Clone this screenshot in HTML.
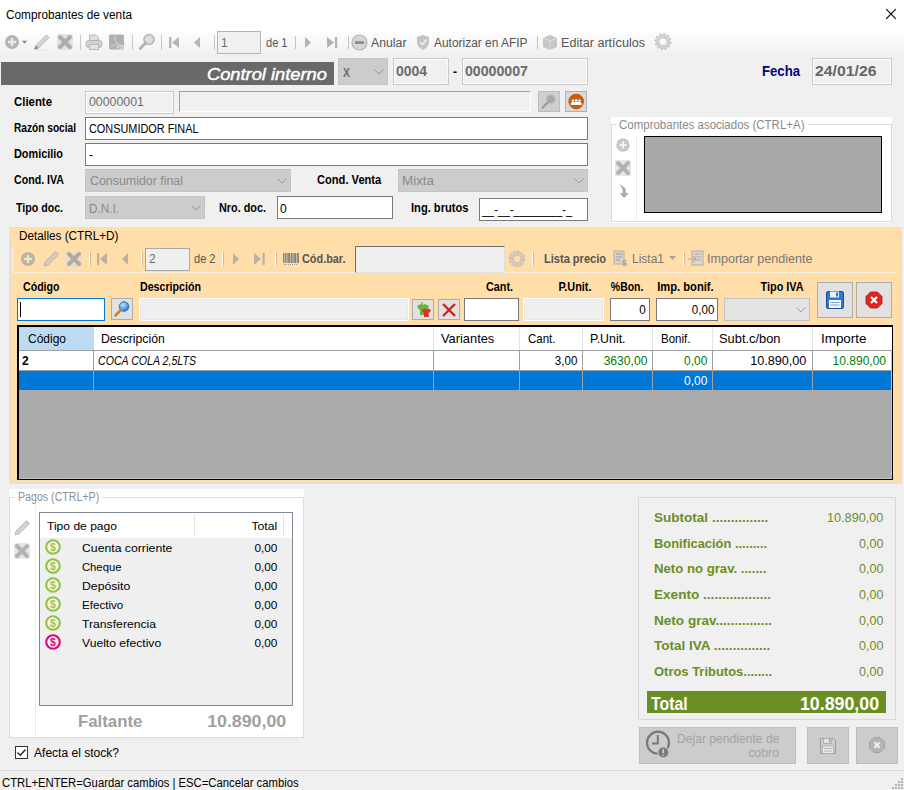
<!DOCTYPE html>
<html><head><meta charset="utf-8"><style>
html,body{margin:0;padding:0;}
body{width:904px;height:790px;position:relative;overflow:hidden;background:#f0f0f0;font-family:'Liberation Sans', sans-serif;}
</style></head><body>
<div style="position:absolute;left:0px;top:0px;width:904px;height:30px;box-sizing:border-box;z-index:1;background:#fff;"></div>
<svg style="position:absolute;left:885px;top:8px;z-index:3" width="12" height="12" viewBox="0 0 12 12"><path d="M1.2,1.2 L10.8,10.8 M10.8,1.2 L1.2,10.8" stroke="#000" stroke-width="1.1"/></svg>
<div style="position:absolute;left:0px;top:30px;width:904px;height:26px;box-sizing:border-box;z-index:1;background:linear-gradient(#fefefe,#f0f0f0);"></div>
<svg style="position:absolute;left:4px;top:34px;z-index:3" width="26" height="16" viewBox="0 0 26 16"><circle cx="8" cy="8" r="7" fill="#b5b5b5"/><path d="M8,4v8M4,8h8" stroke="#ececec" stroke-width="2.4"/><path d="M18,6.8h5.2l-2.6,3z" fill="#8a8a8a"/></svg>
<svg style="position:absolute;left:33px;top:33px;z-index:3" width="18" height="18" viewBox="0 0 18 18"><path d="M1.5,16.5 L2.8,12.5 L13.5,1.8 L16.2,4.5 L5.5,15.2 Z" fill="#d4d4d4" stroke="#b8b8b8" stroke-width="0.9"/><path d="M1.5,16.5 L2.8,12.5 L5.5,15.2Z" fill="#8c8c8c"/><path d="M3,17.2 H14" stroke="#e2e2e2" stroke-width="0.8"/></svg>
<svg style="position:absolute;left:56px;top:33px;z-index:3" width="18" height="18" viewBox="0 0 18 18"><rect x="1" y="1" width="16" height="16" rx="2" fill="#e2e2e2"/><path d="M4,4 L14,14 M14,4 L4,14" stroke="#adadad" stroke-width="4" stroke-linecap="round"/></svg>
<div style="position:absolute;left:80px;top:35px;width:1px;height:15px;box-sizing:border-box;z-index:3;background:#c8c8c8;"></div>
<svg style="position:absolute;left:85px;top:33px;z-index:3" width="18" height="18" viewBox="0 0 18 18"><path d="M4.5,8 V2 H11 L13.5,4.5 V8" fill="#dedede" stroke="#b8b8b8"/><rect x="1.2" y="7.5" width="15.6" height="7" rx="2.5" fill="#d2d2d2" stroke="#b3b3b3"/><rect x="4.5" y="11.5" width="9" height="5" fill="#e4e4e4" stroke="#b8b8b8"/></svg>
<svg style="position:absolute;left:108px;top:33px;z-index:3" width="18" height="18" viewBox="0 0 18 18"><rect x="1" y="1.5" width="15" height="15" rx="1.5" fill="#b0b0b0"/><path d="M6.5,2 Q7,8 9,10 Q11,12 14,12.5 M9,10 Q6,12 3,14" stroke="#dcdcdc" fill="none" stroke-width="0.8"/><text x="8.5" y="15.5" font-size="4.5" font-weight="bold" fill="#e0e0e0" font-family="Liberation Sans">PDF</text></svg>
<div style="position:absolute;left:132px;top:35px;width:1px;height:15px;box-sizing:border-box;z-index:3;background:#c8c8c8;"></div>
<svg style="position:absolute;left:138px;top:33px;z-index:3" width="18" height="18" viewBox="0 0 18 18"><circle cx="11" cy="6.5" r="5" fill="#dcdcdc" stroke="#b5b5b5" stroke-width="1.6"/><path d="M7.5,10 L2.2,15.5" stroke="#b0b0b0" stroke-width="2.6" stroke-linecap="round"/></svg>
<div style="position:absolute;left:161px;top:35px;width:1px;height:15px;box-sizing:border-box;z-index:3;background:#c8c8c8;"></div>
<svg style="position:absolute;left:168px;top:36px;z-index:3" width="14" height="13" viewBox="0 0 14 13"><rect x="1" y="1" width="2.4" height="11" fill="#b5b5b5"/><path d="M11,1 L4,6.5 L11,12Z" fill="#b5b5b5"/></svg>
<svg style="position:absolute;left:192px;top:36px;z-index:3" width="10" height="13" viewBox="0 0 10 13"><path d="M8,1 L2,6.5 L8,12Z" fill="#b5b5b5"/></svg>
<div style="position:absolute;left:214px;top:35px;width:1px;height:15px;box-sizing:border-box;z-index:3;background:#c8c8c8;"></div>
<div style="position:absolute;left:217px;top:31px;width:44px;height:23px;box-sizing:border-box;z-index:2;background:#f0f0f0;border:1px solid #b5b5b5;"></div>
<div style="position:absolute;left:295px;top:36px;width:1px;height:13px;box-sizing:border-box;z-index:3;background:#c4c4c4;"></div>
<svg style="position:absolute;left:303px;top:36px;z-index:3" width="10" height="13" viewBox="0 0 10 13"><path d="M2,1 L8,6.5 L2,12Z" fill="#b3b3b3"/></svg>
<svg style="position:absolute;left:326px;top:36px;z-index:3" width="13" height="13" viewBox="0 0 13 13"><path d="M1,1 L8,6.5 L1,12Z" fill="#b3b3b3"/><rect x="9" y="1" width="2.2" height="11" fill="#b3b3b3"/></svg>
<div style="position:absolute;left:348px;top:36px;width:1px;height:13px;box-sizing:border-box;z-index:3;background:#c4c4c4;"></div>
<svg style="position:absolute;left:351px;top:34px;z-index:3" width="18" height="17" viewBox="0 0 18 17"><circle cx="8.5" cy="8.5" r="7.5" fill="#d6d6d6" stroke="#b3b3b3" stroke-width="1.2"/><rect x="4" y="7.2" width="9" height="2.8" fill="#8e8e8e"/></svg>
<svg style="position:absolute;left:415px;top:34px;z-index:3" width="16" height="17" viewBox="0 0 16 17"><path d="M8,1 L14,3 L14,9 Q13,14 8,16 Q3,14 2,9 L2,3Z" fill="#c4c4c4"/><path d="M5,8 L7.5,10.5 L11.5,5.5" stroke="#efefef" stroke-width="1.6" fill="none"/></svg>
<div style="position:absolute;left:537px;top:36px;width:1px;height:13px;box-sizing:border-box;z-index:3;background:#c4c4c4;"></div>
<svg style="position:absolute;left:542px;top:34px;z-index:3" width="16" height="17" viewBox="0 0 16 17"><path d="M8,1 L15,4 L15,13 L8,16 L1,13 L1,4Z" fill="#c6c6c6"/><path d="M1,4 L8,7 L15,4 M8,7 V16" stroke="#dedede" fill="none"/></svg>
<svg style="position:absolute;left:653px;top:33px;z-index:3" width="19" height="18" viewBox="0 0 19 18"><path fill-rule="evenodd" d="M16.60,8.70 L18.17,9.34 L17.97,10.61 L16.28,10.74 L15.72,12.00 L16.76,13.34 L15.95,14.34 L14.42,13.60 L13.30,14.42 L13.53,16.10 L12.33,16.56 L11.37,15.16 L10.00,15.30 L9.36,16.87 L8.09,16.67 L7.96,14.98 L6.70,14.42 L5.36,15.46 L4.36,14.65 L5.10,13.12 L4.28,12.00 L2.60,12.23 L2.14,11.03 L3.54,10.07 L3.40,8.70 L1.83,8.06 L2.03,6.79 L3.72,6.66 L4.28,5.40 L3.24,4.06 L4.05,3.06 L5.58,3.80 L6.70,2.98 L6.47,1.30 L7.67,0.84 L8.63,2.24 L10.00,2.10 L10.64,0.53 L11.91,0.73 L12.04,2.42 L13.30,2.98 L14.64,1.94 L15.64,2.75 L14.90,4.28 L15.72,5.40 L17.40,5.17 L17.86,6.37 L16.46,7.33Z M14.00,8.70 A4.0,4.0 0 1,0 6.00,8.70 A4.0,4.0 0 1,0 14.00,8.70Z" fill="#d2d2d2" stroke="#bcbcbc" stroke-width="0.7"/></svg>
<div style="position:absolute;left:1px;top:62px;width:333px;height:23px;box-sizing:border-box;z-index:1;background:#696969;"></div>
<div style="position:absolute;left:338px;top:58px;width:50px;height:27px;box-sizing:border-box;z-index:2;background:#cccccc;border:1px solid #c4c4c4;"></div>
<svg style="position:absolute;left:373.5px;top:68.5px;z-index:3" width="10" height="6" viewBox="0 0 10 6"><polyline points="0.5,0.5 5,5 9.5,0.5" fill="none" stroke="#999" stroke-width="1"/></svg>
<div style="position:absolute;left:393px;top:58px;width:56px;height:27px;box-sizing:border-box;z-index:2;background:#f0f0f0;border:1px solid #c9c9c9;box-shadow:inset 0 0 0 1px #fbfbfb;"></div>
<div style="position:absolute;left:462px;top:58px;width:126px;height:27px;box-sizing:border-box;z-index:2;background:#f0f0f0;border:1px solid #c9c9c9;box-shadow:inset 0 0 0 1px #fbfbfb;"></div>
<div style="position:absolute;left:812px;top:58px;width:80px;height:27px;box-sizing:border-box;z-index:2;background:#f0f0f0;border:1px solid #c9c9c9;box-shadow:inset 0 0 0 1px #fbfbfb;"></div>
<div style="position:absolute;left:85px;top:91px;width:89px;height:23px;box-sizing:border-box;z-index:2;background:#f0f0f0;border:1px solid #c9c9c9;box-shadow:inset 0 0 0 1px #fbfbfb;"></div>
<div style="position:absolute;left:179px;top:91px;width:352px;height:21px;box-sizing:border-box;z-index:1;background:#f0f0f0;border-top:1px solid #a0a0a0;border-left:1px solid #a0a0a0;border-bottom:1px solid #fff;border-right:1px solid #fff;"></div>
<div style="position:absolute;left:538px;top:91px;width:22px;height:21px;box-sizing:border-box;z-index:1;background:#cfcfcf;border:1px solid #bdbdbd;"></div>
<svg style="position:absolute;left:540px;top:93px;z-index:3" width="18" height="17" viewBox="0 0 18 17"><circle cx="10.8" cy="6.2" r="4.6" fill="#a9a9a9" stroke="#c4c4c4" stroke-width="1.2"/><path d="M7.6,9.4 L2.8,14.6" stroke="#9a9a9a" stroke-width="2.2" stroke-linecap="round"/></svg>
<div style="position:absolute;left:565px;top:91px;width:22px;height:21px;box-sizing:border-box;z-index:1;background:#d9d9d9;border:1px solid #b0b0b0;"></div>
<svg style="position:absolute;left:567px;top:93px;z-index:3" width="18" height="17" viewBox="0 0 18 17"><circle cx="9.2" cy="8.6" r="7.8" fill="#c85c0c"/><path d="M3.8,12 h10.8 v-1.6 q-0.8,-1.6 -2.5,-1.6 h-5.8 q-1.7,0 -2.5,1.6z" fill="#fff"/><circle cx="5.8" cy="7.6" r="1.2" fill="#fff"/><circle cx="9.2" cy="7.2" r="1.3" fill="#fff"/><circle cx="12.6" cy="7.6" r="1.2" fill="#fff"/><path d="M5.8,9v2M9.2,8.8v2M12.6,9v2" stroke="#fff" stroke-width="1.6"/></svg>
<div style="position:absolute;left:85px;top:117px;width:503px;height:23px;box-sizing:border-box;z-index:2;background:#fff;border:1px solid #7a7a7a;"></div>
<div style="position:absolute;left:85px;top:143px;width:503px;height:23px;box-sizing:border-box;z-index:2;background:#fff;border:1px solid #7a7a7a;"></div>
<div style="position:absolute;left:85px;top:169px;width:206px;height:23px;box-sizing:border-box;z-index:2;background:#cccccc;border:1px solid #c4c4c4;"></div>
<svg style="position:absolute;left:276.5px;top:177.5px;z-index:3" width="10" height="6" viewBox="0 0 10 6"><polyline points="0.5,0.5 5,5 9.5,0.5" fill="none" stroke="#999" stroke-width="1"/></svg>
<div style="position:absolute;left:398px;top:169px;width:190px;height:23px;box-sizing:border-box;z-index:2;background:#cccccc;border:1px solid #c4c4c4;"></div>
<svg style="position:absolute;left:573.5px;top:177.5px;z-index:3" width="10" height="6" viewBox="0 0 10 6"><polyline points="0.5,0.5 5,5 9.5,0.5" fill="none" stroke="#999" stroke-width="1"/></svg>
<div style="position:absolute;left:85px;top:196px;width:120px;height:23px;box-sizing:border-box;z-index:2;background:#cccccc;border:1px solid #c4c4c4;"></div>
<svg style="position:absolute;left:190.5px;top:204.5px;z-index:3" width="10" height="6" viewBox="0 0 10 6"><polyline points="0.5,0.5 5,5 9.5,0.5" fill="none" stroke="#999" stroke-width="1"/></svg>
<div style="position:absolute;left:277px;top:196px;width:116px;height:23px;box-sizing:border-box;z-index:2;background:#fff;border:1px solid #7a7a7a;"></div>
<div style="position:absolute;left:479px;top:198px;width:109px;height:23px;box-sizing:border-box;z-index:2;background:#fff;border:1px solid #7a7a7a;"></div>
<div style="position:absolute;left:611px;top:117px;width:281px;height:106px;box-sizing:border-box;z-index:1;background:#fff;"></div>
<div style="position:absolute;left:611px;top:124px;width:281px;height:98px;box-sizing:border-box;z-index:2;border:1px solid #dcdcdc;"></div>
<div style="position:absolute;left:616px;top:119px;width:192px;height:12px;box-sizing:border-box;z-index:3;background:#fff;"></div>
<div style="position:absolute;left:636px;top:136px;width:1px;height:83px;box-sizing:border-box;z-index:3;background:#ececec;"></div>
<svg style="position:absolute;left:615px;top:137px;z-index:3" width="16" height="16" viewBox="0 0 16 16"><circle cx="8" cy="8" r="6.8" fill="#c8c8c8"/><path d="M8,4.5v7M4.5,8h7" stroke="#f4f4f4" stroke-width="2"/></svg>
<svg style="position:absolute;left:614px;top:159px;z-index:3" width="18" height="18" viewBox="0 0 18 18"><rect x="1" y="1" width="16" height="16" rx="2" fill="#e6e6e6"/><path d="M4,4 L14,14 M14,4 L4,14" stroke="#b3b3b3" stroke-width="4" stroke-linecap="round"/></svg>
<svg style="position:absolute;left:615px;top:183px;z-index:3" width="16" height="16" viewBox="0 0 16 16"><path d="M4,1 Q12,4 11,10 L14,10 L9,15 L4.5,10 L7.5,10 Q8,5 4,1Z" fill="#b0b0b0"/></svg>
<div style="position:absolute;left:644px;top:136px;width:238px;height:77px;box-sizing:border-box;z-index:2;background:#a9a9a9;border:1px solid #000;"></div>
<div style="position:absolute;left:9px;top:227px;width:893px;height:257px;box-sizing:border-box;z-index:0;background:#ffdeaa;"></div>
<div style="position:absolute;left:10px;top:235px;width:892px;height:248px;box-sizing:border-box;z-index:1;border:1px solid #e4dcd0;"></div>
<div style="position:absolute;left:15px;top:229px;width:106px;height:12px;box-sizing:border-box;z-index:1;background:#ffdeaa;"></div>
<div style="position:absolute;left:12px;top:246px;width:886px;height:27px;box-sizing:border-box;z-index:1;border-bottom:1px solid #fbf1e3;border-left:1px solid #fbf1e3;border-right:1px solid #f1e2cc;border-radius:3px;"></div>
<svg style="position:absolute;left:20px;top:251px;z-index:3" width="16" height="16" viewBox="0 0 16 16"><circle cx="8" cy="8" r="7" fill="#bfb3a4"/><path d="M8,4v8M4,8h8" stroke="#f2e6d6" stroke-width="2.2"/></svg>
<svg style="position:absolute;left:42px;top:250px;z-index:3" width="18" height="18" viewBox="0 0 18 18"><path d="M2,16 L3,12 L13.5,1.5 L16.5,4.5 L6,15 Z" fill="#d9cbb9" stroke="#bdb1a2" stroke-width="1"/></svg>
<svg style="position:absolute;left:65px;top:250px;z-index:3" width="18" height="18" viewBox="0 0 18 18"><rect x="1" y="1" width="16" height="16" rx="2" fill="#e9ddd0"/><path d="M4,4 L14,14 M14,4 L4,14" stroke="#b3aa9e" stroke-width="4" stroke-linecap="round"/></svg>
<div style="position:absolute;left:89px;top:252px;width:1px;height:14px;box-sizing:border-box;z-index:3;background:#fff;"></div>
<div style="position:absolute;left:90px;top:252px;width:1px;height:14px;box-sizing:border-box;z-index:3;background:#c9bba8;"></div>
<svg style="position:absolute;left:96px;top:252px;z-index:3" width="14" height="14" viewBox="0 0 14 14"><rect x="1" y="1" width="2.2" height="12" fill="#bdb1a2"/><path d="M11,1 L4,7 L11,13Z" fill="#bdb1a2"/></svg>
<svg style="position:absolute;left:120px;top:252px;z-index:3" width="10" height="14" viewBox="0 0 10 14"><path d="M8,1 L2,7 L8,13Z" fill="#bdb1a2"/></svg>
<div style="position:absolute;left:141px;top:252px;width:1px;height:14px;box-sizing:border-box;z-index:3;background:#fff;"></div>
<div style="position:absolute;left:142px;top:252px;width:1px;height:14px;box-sizing:border-box;z-index:3;background:#c9bba8;"></div>
<div style="position:absolute;left:145px;top:248px;width:45px;height:23px;box-sizing:border-box;z-index:2;background:#efefef;border:1px solid #a8a8a8;"></div>
<div style="position:absolute;left:222px;top:252px;width:1px;height:14px;box-sizing:border-box;z-index:3;background:#fff;"></div>
<div style="position:absolute;left:223px;top:252px;width:1px;height:14px;box-sizing:border-box;z-index:3;background:#c9bba8;"></div>
<svg style="position:absolute;left:231px;top:252px;z-index:3" width="10" height="14" viewBox="0 0 10 14"><path d="M2,1 L8,7 L2,13Z" fill="#bdb1a2"/></svg>
<svg style="position:absolute;left:253px;top:252px;z-index:3" width="13" height="14" viewBox="0 0 13 14"><path d="M1,1 L8,7 L1,13Z" fill="#bdb1a2"/><rect x="9.5" y="1" width="2.2" height="12" fill="#bdb1a2"/></svg>
<div style="position:absolute;left:275px;top:252px;width:1px;height:14px;box-sizing:border-box;z-index:3;background:#fff;"></div>
<div style="position:absolute;left:276px;top:252px;width:1px;height:14px;box-sizing:border-box;z-index:3;background:#c9bba8;"></div>
<svg style="position:absolute;left:283px;top:251px;z-index:3" width="16" height="16" viewBox="0 0 16 16"><rect x="0" y="2" width="16" height="10" fill="#d8ccb8"/><rect x="0" y="2" width="1.2" height="10" fill="#8a8279"/><rect x="2" y="2" width="1" height="10" fill="#8a8279"/><rect x="3.6" y="2" width="1" height="10" fill="#8a8279"/><rect x="5.2" y="2" width="2" height="10" fill="#8a8279"/><rect x="8" y="2" width="1" height="10" fill="#8a8279"/><rect x="9.6" y="2" width="1" height="10" fill="#8a8279"/><rect x="11.2" y="2" width="1.8" height="10" fill="#8a8279"/><rect x="13.8" y="2" width="1" height="10" fill="#8a8279"/><rect x="15" y="2" width="1" height="10" fill="#8a8279"/><path d="M1,13.5h14" stroke="#9d958a" stroke-dasharray="1 1"/></svg>
<div style="position:absolute;left:355px;top:246px;width:150px;height:27px;box-sizing:border-box;z-index:2;background:#efefef;border:1px solid #6d6d6d;border-right-color:#e0e0e0;border-bottom-color:#e0e0e0;"></div>
<svg style="position:absolute;left:508px;top:250px;z-index:3" width="18" height="18" viewBox="0 0 18 18"><path fill-rule="evenodd" d="M15.60,9.00 L17.17,9.64 L16.97,10.91 L15.28,11.04 L14.72,12.30 L15.76,13.64 L14.95,14.64 L13.42,13.90 L12.30,14.72 L12.53,16.40 L11.33,16.86 L10.37,15.46 L9.00,15.60 L8.36,17.17 L7.09,16.97 L6.96,15.28 L5.70,14.72 L4.36,15.76 L3.36,14.95 L4.10,13.42 L3.28,12.30 L1.60,12.53 L1.14,11.33 L2.54,10.37 L2.40,9.00 L0.83,8.36 L1.03,7.09 L2.72,6.96 L3.28,5.70 L2.24,4.36 L3.05,3.36 L4.58,4.10 L5.70,3.28 L5.47,1.60 L6.67,1.14 L7.63,2.54 L9.00,2.40 L9.64,0.83 L10.91,1.03 L11.04,2.72 L12.30,3.28 L13.64,2.24 L14.64,3.05 L13.90,4.58 L14.72,5.70 L16.40,5.47 L16.86,6.67 L15.46,7.63Z M13.00,9.00 A4.0,4.0 0 1,0 5.00,9.00 A4.0,4.0 0 1,0 13.00,9.00Z" fill="#d6cbbd" stroke="#bfb5a8" stroke-width="0.7"/></svg>
<div style="position:absolute;left:532px;top:252px;width:1px;height:14px;box-sizing:border-box;z-index:3;background:#fff;"></div>
<div style="position:absolute;left:533px;top:252px;width:1px;height:14px;box-sizing:border-box;z-index:3;background:#c9bba8;"></div>
<svg style="position:absolute;left:613px;top:250px;z-index:3" width="17" height="18" viewBox="0 0 17 18"><rect x="1" y="1" width="10" height="13" fill="#d9d2c8" stroke="#b3aca3"/><path d="M3,4h6M3,7h6M3,10h4" stroke="#a19a91"/><text x="9" y="16" font-size="9" font-weight="bold" fill="#a8a29a" font-family="Liberation Sans">$</text></svg>
<svg style="position:absolute;left:669px;top:256px;z-index:3" width="8" height="5" viewBox="0 0 8 5"><path d="M0,0h7l-3.5,4z" fill="#a8a29a"/></svg>
<div style="position:absolute;left:683px;top:252px;width:1px;height:14px;box-sizing:border-box;z-index:3;background:#fff;"></div>
<div style="position:absolute;left:684px;top:252px;width:1px;height:14px;box-sizing:border-box;z-index:3;background:#c9bba8;"></div>
<svg style="position:absolute;left:688px;top:250px;z-index:3" width="16" height="17" viewBox="0 0 16 17"><rect x="4" y="1" width="11" height="14" fill="#ddd6cc" stroke="#b3aca3"/><path d="M6,4h7M6,7h7M6,10h7" stroke="#b0a9a0"/><path d="M0,9h7M5,6l3,3l-3,3" stroke="#b3aca3" fill="none"/></svg>
<div style="position:absolute;left:17px;top:298px;width:88px;height:23px;box-sizing:border-box;z-index:2;background:#fff;border:1px solid #0078d7;"></div>
<div style="position:absolute;left:20px;top:302px;width:1px;height:15px;box-sizing:border-box;z-index:3;background:#000;"></div>
<div style="position:absolute;left:111px;top:298px;width:22px;height:22px;box-sizing:border-box;z-index:2;background:#e1e1e1;border:1px solid #adadad;"></div>
<svg style="position:absolute;left:113px;top:300px;z-index:3" width="18" height="18" viewBox="0 0 18 18"><defs><radialGradient id="mg" cx="0.4" cy="0.35" r="0.7"><stop offset="0" stop-color="#bfe3ff"/><stop offset="1" stop-color="#1d6fd6"/></radialGradient></defs><circle cx="11" cy="6.5" r="4.8" fill="url(#mg)" stroke="#2c5c9a" stroke-width="0.8"/><path d="M7.8,10 L2.5,15.5" stroke="#c48b2a" stroke-width="2.6" stroke-linecap="round"/></svg>
<div style="position:absolute;left:139px;top:298px;width:270px;height:23px;box-sizing:border-box;z-index:2;background:#efefef;border:1px solid #fff;box-shadow:inset 0 0 0 1px #e8e8e8;"></div>
<div style="position:absolute;left:412px;top:299px;width:22px;height:21px;box-sizing:border-box;z-index:2;background:#e1e1e1;border:1px solid #adadad;"></div>
<svg style="position:absolute;left:414px;top:301px;z-index:3" width="18" height="18" viewBox="0 0 18 18"><path d="M3,5 L7,3 Q9,5 11,3 L15,5 L13,9 L12,8 L12,14 L6,14 L6,8 L5,9Z" fill="#6cb33e"/><path d="M8,9 L11,7.5 Q12.5,9 14,7.5 L17,9 L15.5,12 L14.7,11.3 L14.7,16 L10,16 L10,11.3 L9.3,12Z" fill="#d9342b"/><path d="M8,1v3" stroke="#6cb33e" stroke-width="1.2"/></svg>
<div style="position:absolute;left:438px;top:299px;width:22px;height:21px;box-sizing:border-box;z-index:2;background:#e1e1e1;border:1px solid #adadad;"></div>
<svg style="position:absolute;left:441px;top:302px;z-index:3" width="16" height="16" viewBox="0 0 16 16"><path d="M2,2 L14,14 M14,2 L2,14" stroke="#d32020" stroke-width="2.4"/></svg>
<div style="position:absolute;left:464px;top:298px;width:55px;height:23px;box-sizing:border-box;z-index:2;background:#fff;border:1px solid #7a7a7a;"></div>
<div style="position:absolute;left:523px;top:298px;width:81px;height:23px;box-sizing:border-box;z-index:2;background:#efefef;border:1px solid #fff;box-shadow:inset 0 0 0 1px #e8e8e8;"></div>
<div style="position:absolute;left:610px;top:298px;width:40px;height:23px;box-sizing:border-box;z-index:2;background:#fff;border:1px solid #7a7a7a;"></div>
<div style="position:absolute;left:656px;top:298px;width:62px;height:23px;box-sizing:border-box;z-index:2;background:#fff;border:1px solid #7a7a7a;"></div>
<div style="position:absolute;left:724px;top:298px;width:86px;height:23px;box-sizing:border-box;z-index:2;background:#e3e3e3;border:1px solid #c2c2c2;"></div>
<svg style="position:absolute;left:795.5px;top:306.5px;z-index:3" width="10" height="6" viewBox="0 0 10 6"><polyline points="0.5,0.5 5,5 9.5,0.5" fill="none" stroke="#999" stroke-width="1"/></svg>
<div style="position:absolute;left:817px;top:282px;width:36px;height:36px;box-sizing:border-box;z-index:2;background:#e1e1e1;border:1px solid #adadad;"></div>
<svg style="position:absolute;left:825px;top:290px;z-index:3" width="20" height="20" viewBox="0 0 20 20"><rect x="1.5" y="1.5" width="17" height="17" rx="1.5" fill="#2f79d3" stroke="#1c4f99"/><rect x="5" y="1.5" width="9" height="6" fill="#e8f1fb"/><rect x="11" y="2.5" width="2" height="4" fill="#2f79d3"/><rect x="4" y="10" width="12" height="8" fill="#f4f7fb"/><path d="M5.5,12.5h9M5.5,15h9" stroke="#7da4d6"/></svg>
<div style="position:absolute;left:856px;top:282px;width:36px;height:36px;box-sizing:border-box;z-index:2;background:#e1e1e1;border:1px solid #adadad;"></div>
<svg style="position:absolute;left:865px;top:291px;z-index:3" width="18" height="18" viewBox="0 0 18 18"><path d="M5.5,1 h7 l4.5,4.5 v7 l-4.5,4.5 h-7 l-4.5,-4.5 v-7z" fill="#e0261c" stroke="#b31b14" stroke-width="0.8"/><path d="M6,6 L12,12 M12,6 L6,12" stroke="#fff" stroke-width="2.2"/></svg>
<div style="position:absolute;left:17px;top:325px;width:876px;height:155px;box-sizing:border-box;z-index:2;background:#ababab;border:1px solid #000;border-left-width:2px;border-top-width:2px;box-shadow:inset -1px -1px 0 #c4c4c4;"></div>
<div style="position:absolute;left:19px;top:327px;width:873px;height:23px;box-sizing:border-box;z-index:3;background:#fff;"></div>
<div style="position:absolute;left:19px;top:327px;width:75px;height:23px;box-sizing:border-box;z-index:5;background:#bcdcf4;"></div>
<div style="position:absolute;left:19px;top:350px;width:873px;height:1px;box-sizing:border-box;z-index:4;background:#a0a0a0;"></div>
<div style="position:absolute;left:19px;top:351px;width:872px;height:19px;box-sizing:border-box;z-index:3;background:#fff;"></div>
<div style="position:absolute;left:19px;top:370px;width:872px;height:1px;box-sizing:border-box;z-index:4;background:#a0a0a0;"></div>
<div style="position:absolute;left:19px;top:371px;width:872px;height:19px;box-sizing:border-box;z-index:3;background:#0078d7;"></div>
<div style="position:absolute;left:93px;top:327px;width:1px;height:23px;box-sizing:border-box;z-index:4;background:#e5e5e5;"></div>
<div style="position:absolute;left:93px;top:351px;width:1px;height:39px;box-sizing:border-box;z-index:4;background:#a0a0a0;"></div>
<div style="position:absolute;left:433px;top:327px;width:1px;height:23px;box-sizing:border-box;z-index:4;background:#e5e5e5;"></div>
<div style="position:absolute;left:433px;top:351px;width:1px;height:39px;box-sizing:border-box;z-index:4;background:#a0a0a0;"></div>
<div style="position:absolute;left:519px;top:327px;width:1px;height:23px;box-sizing:border-box;z-index:4;background:#e5e5e5;"></div>
<div style="position:absolute;left:519px;top:351px;width:1px;height:39px;box-sizing:border-box;z-index:4;background:#a0a0a0;"></div>
<div style="position:absolute;left:582px;top:327px;width:1px;height:23px;box-sizing:border-box;z-index:4;background:#e5e5e5;"></div>
<div style="position:absolute;left:582px;top:351px;width:1px;height:39px;box-sizing:border-box;z-index:4;background:#a0a0a0;"></div>
<div style="position:absolute;left:652px;top:327px;width:1px;height:23px;box-sizing:border-box;z-index:4;background:#e5e5e5;"></div>
<div style="position:absolute;left:652px;top:351px;width:1px;height:39px;box-sizing:border-box;z-index:4;background:#a0a0a0;"></div>
<div style="position:absolute;left:712px;top:327px;width:1px;height:23px;box-sizing:border-box;z-index:4;background:#e5e5e5;"></div>
<div style="position:absolute;left:712px;top:351px;width:1px;height:39px;box-sizing:border-box;z-index:4;background:#a0a0a0;"></div>
<div style="position:absolute;left:812px;top:327px;width:1px;height:23px;box-sizing:border-box;z-index:4;background:#e5e5e5;"></div>
<div style="position:absolute;left:812px;top:351px;width:1px;height:39px;box-sizing:border-box;z-index:4;background:#a0a0a0;"></div>
<div style="position:absolute;left:9px;top:489px;width:295px;height:249px;box-sizing:border-box;z-index:0;background:#fff;"></div>
<div style="position:absolute;left:9px;top:497px;width:295px;height:241px;box-sizing:border-box;z-index:1;border:1px solid #dddddd;"></div>
<div style="position:absolute;left:15px;top:490px;width:87px;height:13px;box-sizing:border-box;z-index:1;background:#fff;"></div>
<div style="position:absolute;left:35px;top:505px;width:1px;height:231px;box-sizing:border-box;z-index:3;background:#ececec;"></div>
<svg style="position:absolute;left:13px;top:519px;z-index:3" width="18" height="18" viewBox="0 0 18 18"><path d="M2,16 L3,12 L13.5,1.5 L16.5,4.5 L6,15 Z" fill="#d2d2d2" stroke="#bdbdbd" stroke-width="1"/></svg>
<svg style="position:absolute;left:13px;top:542px;z-index:3" width="18" height="18" viewBox="0 0 18 18"><rect x="1" y="1" width="16" height="16" rx="2" fill="#e6e6e6"/><path d="M4,4 L14,14 M14,4 L4,14" stroke="#b3b3b3" stroke-width="4" stroke-linecap="round"/></svg>
<div style="position:absolute;left:39px;top:512px;width:254px;height:194px;box-sizing:border-box;z-index:2;background:#efefef;border:1px solid #7e8793;"></div>
<div style="position:absolute;left:40px;top:513px;width:252px;height:25px;box-sizing:border-box;z-index:3;background:#fff;"></div>
<div style="position:absolute;left:194px;top:514px;width:1px;height:23px;box-sizing:border-box;z-index:4;background:#e5e5e5;"></div>
<div style="position:absolute;left:283px;top:514px;width:1px;height:23px;box-sizing:border-box;z-index:4;background:#e5e5e5;"></div>
<svg style="position:absolute;left:45px;top:539px;z-index:3" width="16" height="16" viewBox="0 0 16 16"><circle cx="8" cy="8" r="6.8" fill="#f4f4f4" stroke="#8cc63f" stroke-width="2.1"/><text x="8" y="11.7" text-anchor="middle" font-size="10.5" font-weight="bold" fill="#a3c24a" font-family="Liberation Sans">$</text></svg>
<svg style="position:absolute;left:45px;top:558px;z-index:3" width="16" height="16" viewBox="0 0 16 16"><circle cx="8" cy="8" r="6.8" fill="#f4f4f4" stroke="#8cc63f" stroke-width="2.1"/><text x="8" y="11.7" text-anchor="middle" font-size="10.5" font-weight="bold" fill="#a3c24a" font-family="Liberation Sans">$</text></svg>
<svg style="position:absolute;left:45px;top:577px;z-index:3" width="16" height="16" viewBox="0 0 16 16"><circle cx="8" cy="8" r="6.8" fill="#f4f4f4" stroke="#8cc63f" stroke-width="2.1"/><text x="8" y="11.7" text-anchor="middle" font-size="10.5" font-weight="bold" fill="#a3c24a" font-family="Liberation Sans">$</text></svg>
<svg style="position:absolute;left:45px;top:596px;z-index:3" width="16" height="16" viewBox="0 0 16 16"><circle cx="8" cy="8" r="6.8" fill="#f4f4f4" stroke="#8cc63f" stroke-width="2.1"/><text x="8" y="11.7" text-anchor="middle" font-size="10.5" font-weight="bold" fill="#a3c24a" font-family="Liberation Sans">$</text></svg>
<svg style="position:absolute;left:45px;top:615px;z-index:3" width="16" height="16" viewBox="0 0 16 16"><circle cx="8" cy="8" r="6.8" fill="#f4f4f4" stroke="#8cc63f" stroke-width="2.1"/><text x="8" y="11.7" text-anchor="middle" font-size="10.5" font-weight="bold" fill="#a3c24a" font-family="Liberation Sans">$</text></svg>
<svg style="position:absolute;left:45px;top:634px;z-index:3" width="16" height="16" viewBox="0 0 16 16"><circle cx="8" cy="8" r="6.8" fill="#f4f4f4" stroke="#e5007d" stroke-width="2.1"/><text x="8" y="11.7" text-anchor="middle" font-size="10.5" font-weight="bold" fill="#e5007d" font-family="Liberation Sans">$</text></svg>
<div style="position:absolute;left:15px;top:746px;width:13px;height:13px;box-sizing:border-box;z-index:2;background:#fff;border:1px solid #333;"></div>
<svg style="position:absolute;left:15px;top:746px;z-index:3" width="13" height="13" viewBox="0 0 13 13"><path d="M2.5,6.5 L5.3,9.3 L10.5,3.5" stroke="#222" stroke-width="1.3" fill="none"/></svg>
<div style="position:absolute;left:638px;top:497px;width:258px;height:223px;box-sizing:border-box;z-index:1;background:#f0f0f0;border:1px solid #d9d9d9;"></div>
<div style="position:absolute;left:647px;top:691px;width:239px;height:22px;box-sizing:border-box;z-index:2;background:#6b8e23;"></div>
<div style="position:absolute;left:639px;top:727px;width:157px;height:37px;box-sizing:border-box;z-index:2;background:#cccccc;border:1px solid #bfbfbf;"></div>
<svg style="position:absolute;left:644px;top:730px;z-index:3" width="32" height="32" viewBox="0 0 32 32"><circle cx="14" cy="12.7" r="11" fill="none" stroke="#777" stroke-width="2.2"/><path d="M13.8,5 V13.5 H8" stroke="#777" stroke-width="2" fill="none"/><circle cx="19.3" cy="22.4" r="5.6" fill="#7a7a7a" stroke="#cccccc" stroke-width="1.2"/><path d="M19.3,19.2v3.8M19.3,24.4v1.4" stroke="#d6d6d6" stroke-width="1.6"/></svg>
<div style="position:absolute;left:807px;top:727px;width:42px;height:37px;box-sizing:border-box;z-index:2;background:#cccccc;border:1px solid #bfbfbf;"></div>
<svg style="position:absolute;left:818px;top:736px;z-index:3" width="20" height="20" viewBox="0 0 20 20"><path d="M2.5,2.5 H15 L17.5,5 V17.5 H2.5Z" fill="#d0d0d0" stroke="#9a9a9a"/><rect x="5.5" y="2.5" width="8" height="5" fill="#e4e4e4" stroke="#a5a5a5" stroke-width="0.8"/><rect x="11" y="3.3" width="1.5" height="3" fill="#9a9a9a"/><rect x="4.5" y="10" width="11" height="7.5" fill="#ececec" stroke="#a5a5a5" stroke-width="0.8"/><path d="M6,12.5h8M6,15h8" stroke="#a5a5a5" stroke-width="0.8"/></svg>
<div style="position:absolute;left:856px;top:727px;width:42px;height:37px;box-sizing:border-box;z-index:2;background:#cccccc;border:1px solid #bfbfbf;"></div>
<svg style="position:absolute;left:868px;top:736px;z-index:3" width="18" height="18" viewBox="0 0 18 18"><path d="M6,1.5 h6 l4.5,4.5 v6 l-4.5,4.5 h-6 l-4.5,-4.5 v-6z" fill="#b4b4b4" stroke="#9a9a9a" stroke-width="0.8"/><path d="M6.3,6.3 L11.7,11.7 M11.7,6.3 L6.3,11.7" stroke="#ededed" stroke-width="2.2"/></svg>
<div style="position:absolute;left:0px;top:770px;width:904px;height:1px;box-sizing:border-box;z-index:2;background:#dadada;"></div>
<svg style="position:absolute;left:892px;top:777px;z-index:3" width="13" height="13" viewBox="0 0 13 13"><rect x="9" y="1" width="2" height="2" fill="#b0b0b0"/><rect x="6" y="4" width="2" height="2" fill="#b0b0b0"/><rect x="9" y="4" width="2" height="2" fill="#b0b0b0"/><rect x="3" y="7" width="2" height="2" fill="#b0b0b0"/><rect x="6" y="7" width="2" height="2" fill="#b0b0b0"/><rect x="9" y="7" width="2" height="2" fill="#b0b0b0"/><rect x="0" y="10" width="2" height="2" fill="#b0b0b0"/><rect x="3" y="10" width="2" height="2" fill="#b0b0b0"/><rect x="6" y="10" width="2" height="2" fill="#b0b0b0"/><rect x="9" y="10" width="2" height="2" fill="#b0b0b0"/></svg>
<div style="position:absolute;left:5.50px;top:8.94px;line-height:12px;font-family:'Liberation Sans', sans-serif;font-size:12px;font-weight:normal;font-style:normal;white-space:pre;color:#000;transform:scaleX(0.9837);transform-origin:left 50%;z-index:5">Comprobantes de venta</div>
<div style="position:absolute;left:221.00px;top:36.64px;line-height:12px;font-family:'Liberation Sans', sans-serif;font-size:12px;font-weight:normal;font-style:normal;white-space:pre;color:#6d6d6d;z-index:5">1</div>
<div style="position:absolute;left:265.50px;top:36.64px;line-height:12px;font-family:'Liberation Sans', sans-serif;font-size:12px;font-weight:normal;font-style:normal;white-space:pre;color:#555;transform:scaleX(0.9204);transform-origin:left 50%;z-index:5">de 1</div>
<div style="position:absolute;left:371.00px;top:36.64px;line-height:12px;font-family:'Liberation Sans', sans-serif;font-size:12px;font-weight:normal;font-style:normal;white-space:pre;color:#555;transform:scaleX(1.0234);transform-origin:left 50%;z-index:5">Anular</div>
<div style="position:absolute;left:433.50px;top:36.64px;line-height:12px;font-family:'Liberation Sans', sans-serif;font-size:12px;font-weight:normal;font-style:normal;white-space:pre;color:#555;transform:scaleX(0.9942);transform-origin:left 50%;z-index:5">Autorizar en AFIP</div>
<div style="position:absolute;left:561.00px;top:36.64px;line-height:12px;font-family:'Liberation Sans', sans-serif;font-size:12px;font-weight:normal;font-style:normal;white-space:pre;color:#555;transform:scaleX(1.0494);transform-origin:left 50%;z-index:5">Editar artículos</div>
<div style="position:absolute;right:576.60px;top:66.86px;line-height:16px;font-family:'Liberation Sans', sans-serif;font-size:16px;font-weight:normal;font-style:italic;white-space:pre;color:#fff;transform:scaleX(1.1434);transform-origin:right 50%;-webkit-text-stroke:0.45px #fff;z-index:5">Control interno</div>
<div style="position:absolute;left:343.20px;top:65.90px;line-height:13px;font-family:'Liberation Sans', sans-serif;font-size:13px;font-weight:bold;font-style:normal;white-space:pre;color:#6b6b6b;transform:scaleX(0.8072);transform-origin:left 50%;z-index:5">X</div>
<div style="position:absolute;left:395.80px;top:64.25px;line-height:14px;font-family:'Liberation Sans', sans-serif;font-size:14px;font-weight:bold;font-style:normal;white-space:pre;color:#6b6b6b;transform:scaleX(0.9950);transform-origin:left 50%;z-index:5">0004</div>
<div style="position:absolute;left:453.00px;top:66.34px;line-height:12px;font-family:'Liberation Sans', sans-serif;font-size:12px;font-weight:bold;font-style:normal;white-space:pre;color:#000;z-index:5">-</div>
<div style="position:absolute;left:464.50px;top:64.25px;line-height:14px;font-family:'Liberation Sans', sans-serif;font-size:14px;font-weight:bold;font-style:normal;white-space:pre;color:#6b6b6b;transform:scaleX(1.0113);transform-origin:left 50%;z-index:5">00000007</div>
<div style="position:absolute;left:762.40px;top:64.05px;line-height:14px;font-family:'Liberation Sans', sans-serif;font-size:14px;font-weight:bold;font-style:normal;white-space:pre;color:#000080;transform:scaleX(0.9390);transform-origin:left 50%;z-index:5">Fecha</div>
<div style="position:absolute;left:814.60px;top:64.05px;line-height:14px;font-family:'Liberation Sans', sans-serif;font-size:14px;font-weight:bold;font-style:normal;white-space:pre;color:#666;transform:scaleX(1.1284);transform-origin:left 50%;z-index:5">24/01/26</div>
<div style="position:absolute;left:14.00px;top:96.34px;line-height:12px;font-family:'Liberation Sans', sans-serif;font-size:12px;font-weight:bold;font-style:normal;white-space:pre;color:#000;transform:scaleX(0.9496);transform-origin:left 50%;z-index:5">Cliente</div>
<div style="position:absolute;left:88.50px;top:96.34px;line-height:12px;font-family:'Liberation Sans', sans-serif;font-size:12px;font-weight:normal;font-style:normal;white-space:pre;color:#6d6d6d;transform:scaleX(1.0301);transform-origin:left 50%;z-index:5">00000001</div>
<div style="position:absolute;left:14.00px;top:122.34px;line-height:12px;font-family:'Liberation Sans', sans-serif;font-size:12px;font-weight:bold;font-style:normal;white-space:pre;color:#000;transform:scaleX(0.8452);transform-origin:left 50%;z-index:5">Razón social</div>
<div style="position:absolute;left:88.75px;top:122.84px;line-height:12px;font-family:'Liberation Sans', sans-serif;font-size:12px;font-weight:normal;font-style:normal;white-space:pre;color:#000;transform:scaleX(0.9073);transform-origin:left 50%;z-index:5">CONSUMIDOR FINAL</div>
<div style="position:absolute;left:13.50px;top:148.34px;line-height:12px;font-family:'Liberation Sans', sans-serif;font-size:12px;font-weight:bold;font-style:normal;white-space:pre;color:#000;transform:scaleX(0.9071);transform-origin:left 50%;z-index:5">Domicilio</div>
<div style="position:absolute;left:89.00px;top:148.84px;line-height:12px;font-family:'Liberation Sans', sans-serif;font-size:12px;font-weight:normal;font-style:normal;white-space:pre;color:#000;z-index:5">-</div>
<div style="position:absolute;left:14.00px;top:174.34px;line-height:12px;font-family:'Liberation Sans', sans-serif;font-size:12px;font-weight:bold;font-style:normal;white-space:pre;color:#000;transform:scaleX(0.8859);transform-origin:left 50%;z-index:5">Cond. IVA</div>
<div style="position:absolute;left:89.50px;top:175.34px;line-height:12px;font-family:'Liberation Sans', sans-serif;font-size:12px;font-weight:normal;font-style:normal;white-space:pre;color:#8a8a8a;transform:scaleX(1.0328);transform-origin:left 50%;z-index:5">Consumidor final</div>
<div style="position:absolute;left:316.75px;top:174.34px;line-height:12px;font-family:'Liberation Sans', sans-serif;font-size:12px;font-weight:bold;font-style:normal;white-space:pre;color:#000;transform:scaleX(0.9265);transform-origin:left 50%;z-index:5">Cond. Venta</div>
<div style="position:absolute;left:402.00px;top:175.34px;line-height:12px;font-family:'Liberation Sans', sans-serif;font-size:12px;font-weight:normal;font-style:normal;white-space:pre;color:#8a8a8a;transform:scaleX(1.1161);transform-origin:left 50%;z-index:5">Mixta</div>
<div style="position:absolute;left:15.50px;top:202.34px;line-height:12px;font-family:'Liberation Sans', sans-serif;font-size:12px;font-weight:bold;font-style:normal;white-space:pre;color:#000;transform:scaleX(0.8850);transform-origin:left 50%;z-index:5">Tipo doc.</div>
<div style="position:absolute;left:89.00px;top:202.84px;line-height:12px;font-family:'Liberation Sans', sans-serif;font-size:12px;font-weight:normal;font-style:normal;white-space:pre;color:#8a8a8a;transform:scaleX(0.9781);transform-origin:left 50%;z-index:5">D.N.I.</div>
<div style="position:absolute;left:219.00px;top:202.34px;line-height:12px;font-family:'Liberation Sans', sans-serif;font-size:12px;font-weight:bold;font-style:normal;white-space:pre;color:#000;transform:scaleX(0.9036);transform-origin:left 50%;z-index:5">Nro. doc.</div>
<div style="position:absolute;left:280.00px;top:202.84px;line-height:12px;font-family:'Liberation Sans', sans-serif;font-size:12px;font-weight:normal;font-style:normal;white-space:pre;color:#000;z-index:5">0</div>
<div style="position:absolute;left:410.50px;top:202.34px;line-height:12px;font-family:'Liberation Sans', sans-serif;font-size:12px;font-weight:bold;font-style:normal;white-space:pre;color:#000;transform:scaleX(0.9274);transform-origin:left 50%;z-index:5">Ing. brutos</div>
<div style="position:absolute;left:482.20px;top:204.34px;line-height:12px;font-family:'Liberation Sans', sans-serif;font-size:12px;font-weight:normal;font-style:normal;white-space:pre;color:#000;transform:scaleX(0.9114);transform-origin:left 50%;z-index:5">__-__-________-_</div>
<div style="position:absolute;left:619.00px;top:119.34px;line-height:12px;font-family:'Liberation Sans', sans-serif;font-size:12px;font-weight:normal;font-style:normal;white-space:pre;color:#8a8a8a;transform:scaleX(0.9573);transform-origin:left 50%;z-index:5">Comprobantes asociados (CTRL+A)</div>
<div style="position:absolute;left:18.60px;top:229.64px;line-height:12px;font-family:'Liberation Sans', sans-serif;font-size:12px;font-weight:normal;font-style:normal;white-space:pre;color:#000;transform:scaleX(0.9783);transform-origin:left 50%;z-index:5">Detalles (CTRL+D)</div>
<div style="position:absolute;left:149.00px;top:253.34px;line-height:12px;font-family:'Liberation Sans', sans-serif;font-size:12px;font-weight:normal;font-style:normal;white-space:pre;color:#6d6d6d;z-index:5">2</div>
<div style="position:absolute;left:194.00px;top:253.34px;line-height:12px;font-family:'Liberation Sans', sans-serif;font-size:12px;font-weight:normal;font-style:normal;white-space:pre;color:#555;transform:scaleX(0.9204);transform-origin:left 50%;z-index:5">de 2</div>
<div style="position:absolute;left:301.50px;top:253.34px;line-height:12px;font-family:'Liberation Sans', sans-serif;font-size:12px;font-weight:bold;font-style:normal;white-space:pre;color:#555;transform:scaleX(0.9060);transform-origin:left 50%;z-index:5">Cód.bar.</div>
<div style="position:absolute;left:543.75px;top:253.34px;line-height:12px;font-family:'Liberation Sans', sans-serif;font-size:12px;font-weight:bold;font-style:normal;white-space:pre;color:#555;transform:scaleX(0.9204);transform-origin:left 50%;z-index:5">Lista precio</div>
<div style="position:absolute;left:632.00px;top:253.34px;line-height:12px;font-family:'Liberation Sans', sans-serif;font-size:12px;font-weight:normal;font-style:normal;white-space:pre;color:#777;z-index:5">Lista1</div>
<div style="position:absolute;left:707.00px;top:253.34px;line-height:12px;font-family:'Liberation Sans', sans-serif;font-size:12px;font-weight:normal;font-style:normal;white-space:pre;color:#777;transform:scaleX(1.0473);transform-origin:left 50%;z-index:5">Importar pendiente</div>
<div style="position:absolute;left:22.50px;top:281.34px;line-height:12px;font-family:'Liberation Sans', sans-serif;font-size:12px;font-weight:bold;font-style:normal;white-space:pre;color:#000;transform:scaleX(0.8832);transform-origin:left 50%;z-index:5">Código</div>
<div style="position:absolute;left:139.50px;top:281.34px;line-height:12px;font-family:'Liberation Sans', sans-serif;font-size:12px;font-weight:bold;font-style:normal;white-space:pre;color:#000;transform:scaleX(0.8879);transform-origin:left 50%;z-index:5">Descripción</div>
<div style="position:absolute;right:391.00px;top:281.34px;line-height:12px;font-family:'Liberation Sans', sans-serif;font-size:12px;font-weight:bold;font-style:normal;white-space:pre;color:#000;transform:scaleX(0.9000);transform-origin:right 50%;z-index:5">Cant.</div>
<div style="position:absolute;right:313.00px;top:281.34px;line-height:12px;font-family:'Liberation Sans', sans-serif;font-size:12px;font-weight:bold;font-style:normal;white-space:pre;color:#000;transform:scaleX(0.9053);transform-origin:right 50%;z-index:5">P.Unit.</div>
<div style="position:absolute;right:261.00px;top:281.34px;line-height:12px;font-family:'Liberation Sans', sans-serif;font-size:12px;font-weight:bold;font-style:normal;white-space:pre;color:#000;transform:scaleX(0.8703);transform-origin:right 50%;z-index:5">%Bon.</div>
<div style="position:absolute;right:190.50px;top:281.34px;line-height:12px;font-family:'Liberation Sans', sans-serif;font-size:12px;font-weight:bold;font-style:normal;white-space:pre;color:#000;transform:scaleX(0.9315);transform-origin:right 50%;z-index:5">Imp. bonif.</div>
<div style="position:absolute;right:100.00px;top:281.34px;line-height:12px;font-family:'Liberation Sans', sans-serif;font-size:12px;font-weight:bold;font-style:normal;white-space:pre;color:#000;transform:scaleX(0.9041);transform-origin:right 50%;z-index:5">Tipo IVA</div>
<div style="position:absolute;right:258.00px;top:304.34px;line-height:12px;font-family:'Liberation Sans', sans-serif;font-size:12px;font-weight:normal;font-style:normal;white-space:pre;color:#000;transform:scaleX(0.9720);transform-origin:right 50%;z-index:5">0</div>
<div style="position:absolute;right:190.00px;top:304.34px;line-height:12px;font-family:'Liberation Sans', sans-serif;font-size:12px;font-weight:normal;font-style:normal;white-space:pre;color:#000;transform:scaleX(0.9632);transform-origin:right 50%;z-index:5">0,00</div>
<div style="position:absolute;left:27.50px;top:332.00px;line-height:13px;font-family:'Liberation Sans', sans-serif;font-size:13px;font-weight:normal;font-style:normal;white-space:pre;color:#000;transform:scaleX(0.9223);transform-origin:left 50%;z-index:5">Código</div>
<div style="position:absolute;left:101.25px;top:332.00px;line-height:13px;font-family:'Liberation Sans', sans-serif;font-size:13px;font-weight:normal;font-style:normal;white-space:pre;color:#000;transform:scaleX(0.9386);transform-origin:left 50%;z-index:5">Descripción</div>
<div style="position:absolute;left:441.00px;top:332.00px;line-height:13px;font-family:'Liberation Sans', sans-serif;font-size:13px;font-weight:normal;font-style:normal;white-space:pre;color:#000;transform:scaleX(0.9867);transform-origin:left 50%;z-index:5">Variantes</div>
<div style="position:absolute;left:527.50px;top:332.00px;line-height:13px;font-family:'Liberation Sans', sans-serif;font-size:13px;font-weight:normal;font-style:normal;white-space:pre;color:#000;transform:scaleX(0.8849);transform-origin:left 50%;z-index:5">Cant.</div>
<div style="position:absolute;left:590.00px;top:332.00px;line-height:13px;font-family:'Liberation Sans', sans-serif;font-size:13px;font-weight:normal;font-style:normal;white-space:pre;color:#000;transform:scaleX(0.9506);transform-origin:left 50%;z-index:5">P.Unit.</div>
<div style="position:absolute;left:660.50px;top:332.00px;line-height:13px;font-family:'Liberation Sans', sans-serif;font-size:13px;font-weight:normal;font-style:normal;white-space:pre;color:#000;transform:scaleX(0.8872);transform-origin:left 50%;z-index:5">Bonif.</div>
<div style="position:absolute;left:719.00px;top:332.00px;line-height:13px;font-family:'Liberation Sans', sans-serif;font-size:13px;font-weight:normal;font-style:normal;white-space:pre;color:#000;transform:scaleX(0.9894);transform-origin:left 50%;z-index:5">Subt.c/bon</div>
<div style="position:absolute;left:820.50px;top:332.00px;line-height:13px;font-family:'Liberation Sans', sans-serif;font-size:13px;font-weight:normal;font-style:normal;white-space:pre;color:#000;transform:scaleX(1.0323);transform-origin:left 50%;z-index:5">Importe</div>
<div style="position:absolute;left:22.00px;top:355.34px;line-height:12px;font-family:'Liberation Sans', sans-serif;font-size:12px;font-weight:bold;font-style:normal;white-space:pre;color:#000;z-index:5">2</div>
<div style="position:absolute;left:97.50px;top:355.34px;line-height:12px;font-family:'Liberation Sans', sans-serif;font-size:12px;font-weight:normal;font-style:italic;white-space:pre;color:#000;transform:scaleX(0.8834);transform-origin:left 50%;z-index:5">COCA COLA 2,5LTS</div>
<div style="position:absolute;right:326.50px;top:355.34px;line-height:12px;font-family:'Liberation Sans', sans-serif;font-size:12px;font-weight:normal;font-style:normal;white-space:pre;color:#000;transform:scaleX(0.9632);transform-origin:right 50%;z-index:5">3,00</div>
<div style="position:absolute;right:256.50px;top:355.34px;line-height:12px;font-family:'Liberation Sans', sans-serif;font-size:12px;font-weight:normal;font-style:normal;white-space:pre;color:#008000;transform:scaleX(1.0083);transform-origin:right 50%;z-index:5">3630,00</div>
<div style="position:absolute;right:196.50px;top:355.34px;line-height:12px;font-family:'Liberation Sans', sans-serif;font-size:12px;font-weight:normal;font-style:normal;white-space:pre;color:#008000;transform:scaleX(0.9953);transform-origin:right 50%;z-index:5">0,00</div>
<div style="position:absolute;right:97.25px;top:355.34px;line-height:12px;font-family:'Liberation Sans', sans-serif;font-size:12px;font-weight:normal;font-style:normal;white-space:pre;color:#000;transform:scaleX(1.0536);transform-origin:right 50%;z-index:5">10.890,00</div>
<div style="position:absolute;right:18.00px;top:355.34px;line-height:12px;font-family:'Liberation Sans', sans-serif;font-size:12px;font-weight:normal;font-style:normal;white-space:pre;color:#008000;z-index:5">10.890,00</div>
<div style="position:absolute;right:196.50px;top:375.34px;line-height:12px;font-family:'Liberation Sans', sans-serif;font-size:12px;font-weight:normal;font-style:normal;white-space:pre;color:#fff;transform:scaleX(0.9953);transform-origin:right 50%;z-index:5">0,00</div>
<div style="position:absolute;left:18.25px;top:491.14px;line-height:12px;font-family:'Liberation Sans', sans-serif;font-size:12px;font-weight:normal;font-style:normal;white-space:pre;color:#8f8f8f;transform:scaleX(0.8860);transform-origin:left 50%;z-index:5">Pagos (CTRL+P)</div>
<div style="position:absolute;left:47.00px;top:520.99px;line-height:11px;font-family:'Liberation Sans', sans-serif;font-size:11px;font-weight:normal;font-style:normal;white-space:pre;color:#000;transform:scaleX(1.0970);transform-origin:left 50%;z-index:5">Tipo de pago</div>
<div style="position:absolute;right:627.20px;top:520.99px;line-height:11px;font-family:'Liberation Sans', sans-serif;font-size:11px;font-weight:normal;font-style:normal;white-space:pre;color:#000;transform:scaleX(1.1097);transform-origin:right 50%;z-index:5">Total</div>
<div style="position:absolute;left:82.30px;top:542.79px;line-height:11px;font-family:'Liberation Sans', sans-serif;font-size:11px;font-weight:normal;font-style:normal;white-space:pre;color:#000;transform:scaleX(1.1115);transform-origin:left 50%;z-index:5">Cuenta corriente</div>
<div style="position:absolute;right:626.60px;top:542.79px;line-height:11px;font-family:'Liberation Sans', sans-serif;font-size:11px;font-weight:normal;font-style:normal;white-space:pre;color:#000;transform:scaleX(1.0737);transform-origin:right 50%;z-index:5">0,00</div>
<div style="position:absolute;left:82.30px;top:561.79px;line-height:11px;font-family:'Liberation Sans', sans-serif;font-size:11px;font-weight:normal;font-style:normal;white-space:pre;color:#000;transform:scaleX(1.0221);transform-origin:left 50%;z-index:5">Cheque</div>
<div style="position:absolute;right:626.60px;top:561.79px;line-height:11px;font-family:'Liberation Sans', sans-serif;font-size:11px;font-weight:normal;font-style:normal;white-space:pre;color:#000;transform:scaleX(1.0737);transform-origin:right 50%;z-index:5">0,00</div>
<div style="position:absolute;left:82.30px;top:580.79px;line-height:11px;font-family:'Liberation Sans', sans-serif;font-size:11px;font-weight:normal;font-style:normal;white-space:pre;color:#000;transform:scaleX(1.1123);transform-origin:left 50%;z-index:5">Depósito</div>
<div style="position:absolute;right:626.60px;top:580.79px;line-height:11px;font-family:'Liberation Sans', sans-serif;font-size:11px;font-weight:normal;font-style:normal;white-space:pre;color:#000;transform:scaleX(1.0737);transform-origin:right 50%;z-index:5">0,00</div>
<div style="position:absolute;left:82.30px;top:599.79px;line-height:11px;font-family:'Liberation Sans', sans-serif;font-size:11px;font-weight:normal;font-style:normal;white-space:pre;color:#000;transform:scaleX(1.0552);transform-origin:left 50%;z-index:5">Efectivo</div>
<div style="position:absolute;right:626.60px;top:599.79px;line-height:11px;font-family:'Liberation Sans', sans-serif;font-size:11px;font-weight:normal;font-style:normal;white-space:pre;color:#000;transform:scaleX(1.0737);transform-origin:right 50%;z-index:5">0,00</div>
<div style="position:absolute;left:82.30px;top:618.79px;line-height:11px;font-family:'Liberation Sans', sans-serif;font-size:11px;font-weight:normal;font-style:normal;white-space:pre;color:#000;transform:scaleX(1.1086);transform-origin:left 50%;z-index:5">Transferencia</div>
<div style="position:absolute;right:626.60px;top:618.79px;line-height:11px;font-family:'Liberation Sans', sans-serif;font-size:11px;font-weight:normal;font-style:normal;white-space:pre;color:#000;transform:scaleX(1.0737);transform-origin:right 50%;z-index:5">0,00</div>
<div style="position:absolute;left:82.30px;top:637.79px;line-height:11px;font-family:'Liberation Sans', sans-serif;font-size:11px;font-weight:normal;font-style:normal;white-space:pre;color:#000;transform:scaleX(1.1038);transform-origin:left 50%;z-index:5">Vuelto efectivo</div>
<div style="position:absolute;right:626.60px;top:637.79px;line-height:11px;font-family:'Liberation Sans', sans-serif;font-size:11px;font-weight:normal;font-style:normal;white-space:pre;color:#000;transform:scaleX(1.0737);transform-origin:right 50%;z-index:5">0,00</div>
<div style="position:absolute;left:77.90px;top:713.76px;line-height:16px;font-family:'Liberation Sans', sans-serif;font-size:16px;font-weight:bold;font-style:normal;white-space:pre;color:#a0a0a0;transform:scaleX(1.0498);transform-origin:left 50%;z-index:5">Faltante</div>
<div style="position:absolute;right:618.00px;top:713.76px;line-height:16px;font-family:'Liberation Sans', sans-serif;font-size:16px;font-weight:bold;font-style:normal;white-space:pre;color:#a0a0a0;transform:scaleX(1.1097);transform-origin:right 50%;z-index:5">10.890,00</div>
<div style="position:absolute;left:33.60px;top:747.34px;line-height:12px;font-family:'Liberation Sans', sans-serif;font-size:12px;font-weight:normal;font-style:normal;white-space:pre;color:#000;transform:scaleX(1.0033);transform-origin:left 50%;z-index:5">Afecta el stock?</div>
<div style="position:absolute;left:654.40px;top:512.14px;line-height:12px;font-family:'Liberation Sans', sans-serif;font-size:12px;font-weight:bold;font-style:normal;white-space:pre;color:#6b8e23;transform:scaleX(1.1278);transform-origin:left 50%;z-index:5">Subtotal ...............</div>
<div style="position:absolute;right:20.30px;top:512.14px;line-height:12px;font-family:'Liberation Sans', sans-serif;font-size:12px;font-weight:normal;font-style:normal;white-space:pre;color:#6b8e23;transform:scaleX(1.0564);transform-origin:right 50%;z-index:5">10.890,00</div>
<div style="position:absolute;left:654.40px;top:537.74px;line-height:12px;font-family:'Liberation Sans', sans-serif;font-size:12px;font-weight:bold;font-style:normal;white-space:pre;color:#6b8e23;transform:scaleX(1.0735);transform-origin:left 50%;z-index:5">Bonificación .........</div>
<div style="position:absolute;right:20.30px;top:537.74px;line-height:12px;font-family:'Liberation Sans', sans-serif;font-size:12px;font-weight:normal;font-style:normal;white-space:pre;color:#6b8e23;transform:scaleX(1.0403);transform-origin:right 50%;z-index:5">0,00</div>
<div style="position:absolute;left:654.40px;top:563.34px;line-height:12px;font-family:'Liberation Sans', sans-serif;font-size:12px;font-weight:bold;font-style:normal;white-space:pre;color:#6b8e23;transform:scaleX(1.0969);transform-origin:left 50%;z-index:5">Neto no grav. .......</div>
<div style="position:absolute;right:20.30px;top:563.34px;line-height:12px;font-family:'Liberation Sans', sans-serif;font-size:12px;font-weight:normal;font-style:normal;white-space:pre;color:#6b8e23;transform:scaleX(1.0403);transform-origin:right 50%;z-index:5">0,00</div>
<div style="position:absolute;left:654.40px;top:588.94px;line-height:12px;font-family:'Liberation Sans', sans-serif;font-size:12px;font-weight:bold;font-style:normal;white-space:pre;color:#6b8e23;transform:scaleX(1.1320);transform-origin:left 50%;z-index:5">Exento ..................</div>
<div style="position:absolute;right:20.30px;top:588.94px;line-height:12px;font-family:'Liberation Sans', sans-serif;font-size:12px;font-weight:normal;font-style:normal;white-space:pre;color:#6b8e23;transform:scaleX(1.0403);transform-origin:right 50%;z-index:5">0,00</div>
<div style="position:absolute;left:654.40px;top:614.54px;line-height:12px;font-family:'Liberation Sans', sans-serif;font-size:12px;font-weight:bold;font-style:normal;white-space:pre;color:#6b8e23;transform:scaleX(1.1305);transform-origin:left 50%;z-index:5">Neto grav...............</div>
<div style="position:absolute;right:20.30px;top:614.54px;line-height:12px;font-family:'Liberation Sans', sans-serif;font-size:12px;font-weight:normal;font-style:normal;white-space:pre;color:#6b8e23;transform:scaleX(1.0403);transform-origin:right 50%;z-index:5">0,00</div>
<div style="position:absolute;left:654.40px;top:640.14px;line-height:12px;font-family:'Liberation Sans', sans-serif;font-size:12px;font-weight:bold;font-style:normal;white-space:pre;color:#6b8e23;transform:scaleX(1.1268);transform-origin:left 50%;z-index:5">Total IVA ...............</div>
<div style="position:absolute;right:20.30px;top:640.14px;line-height:12px;font-family:'Liberation Sans', sans-serif;font-size:12px;font-weight:normal;font-style:normal;white-space:pre;color:#6b8e23;transform:scaleX(1.0403);transform-origin:right 50%;z-index:5">0,00</div>
<div style="position:absolute;left:654.40px;top:665.74px;line-height:12px;font-family:'Liberation Sans', sans-serif;font-size:12px;font-weight:bold;font-style:normal;white-space:pre;color:#6b8e23;transform:scaleX(1.0801);transform-origin:left 50%;z-index:5">Otros Tributos........</div>
<div style="position:absolute;right:20.30px;top:665.74px;line-height:12px;font-family:'Liberation Sans', sans-serif;font-size:12px;font-weight:normal;font-style:normal;white-space:pre;color:#6b8e23;transform:scaleX(1.0403);transform-origin:right 50%;z-index:5">0,00</div>
<div style="position:absolute;left:650.90px;top:694.76px;line-height:18px;font-family:'Liberation Sans', sans-serif;font-size:18px;font-weight:bold;font-style:normal;white-space:pre;color:#fff;transform:scaleX(0.8807);transform-origin:left 50%;z-index:5">Total</div>
<div style="position:absolute;right:24.50px;top:694.76px;line-height:18px;font-family:'Liberation Sans', sans-serif;font-size:18px;font-weight:bold;font-style:normal;white-space:pre;color:#fff;transform:scaleX(0.9890);transform-origin:right 50%;z-index:5">10.890,00</div>
<div style="position:absolute;right:124.50px;top:733.34px;line-height:12px;font-family:'Liberation Sans', sans-serif;font-size:12px;font-weight:normal;font-style:normal;white-space:pre;color:#a3a3a3;transform:scaleX(1.0096);transform-origin:right 50%;z-index:5">Dejar pendiente de</div>
<div style="position:absolute;right:124.50px;top:746.94px;line-height:12px;font-family:'Liberation Sans', sans-serif;font-size:12px;font-weight:normal;font-style:normal;white-space:pre;color:#a3a3a3;transform:scaleX(1.0289);transform-origin:right 50%;z-index:5">cobro</div>
<div style="position:absolute;left:1.80px;top:776.64px;line-height:12px;font-family:'Liberation Sans', sans-serif;font-size:12px;font-weight:normal;font-style:normal;white-space:pre;color:#000;transform:scaleX(0.9399);transform-origin:left 50%;z-index:5">CTRL+ENTER=Guardar cambios | ESC=Cancelar cambios</div>
</body></html>
